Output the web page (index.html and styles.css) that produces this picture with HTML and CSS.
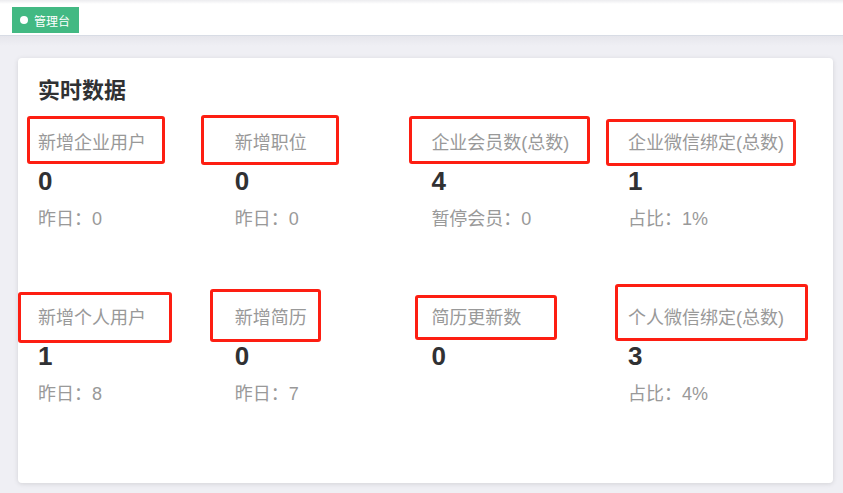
FILE: index.html
```html
<!DOCTYPE html>
<html lang="zh-CN">
<head>
  <meta charset="UTF-8">
  <meta name="viewport" content="width=device-width, initial-scale=1.0">
  <title>管理台</title>
  <link rel="stylesheet" href="styles.css">
</head>
<body>
  <div class="header">
    <div class="tag"><span class="dot"></span>管理台</div>
  </div>
  <div class="main">
    <div class="card">
      <h2 class="title">实时数据</h2>
      <div class="grid">
        <div class="item">
          <div class="label">新增企业用户</div>
          <div class="num">0</div>
          <div class="sub">昨日：0</div>
        </div>
        <div class="item">
          <div class="label">新增职位</div>
          <div class="num">0</div>
          <div class="sub">昨日：0</div>
        </div>
        <div class="item">
          <div class="label">企业会员数(总数)</div>
          <div class="num">4</div>
          <div class="sub">暂停会员：0</div>
        </div>
        <div class="item">
          <div class="label">企业微信绑定(总数)</div>
          <div class="num">1</div>
          <div class="sub">占比：1%</div>
        </div>
        <div class="item">
          <div class="label">新增个人用户</div>
          <div class="num">1</div>
          <div class="sub">昨日：8</div>
        </div>
        <div class="item">
          <div class="label">新增简历</div>
          <div class="num">0</div>
          <div class="sub">昨日：7</div>
        </div>
        <div class="item">
          <div class="label">简历更新数</div>
          <div class="num">0</div>
          <div class="sub"></div>
        </div>
        <div class="item">
          <div class="label">个人微信绑定(总数)</div>
          <div class="num">3</div>
          <div class="sub">占比：4%</div>
        </div>
      </div>
    </div>
  </div>

  <!-- annotation marks drawn over the screenshot -->
  <div class="mark m1"></div>
  <div class="mark m2"></div>
  <div class="mark m3"></div>
  <div class="mark m4"></div>
  <div class="mark m5"></div>
  <div class="mark m6"></div>
  <div class="mark m7"></div>
  <div class="mark m8"></div>
</body>
</html>
```

FILE: styles.css
```css
* {
  box-sizing: border-box;
}
html,
body {
  margin: 0;
  height: 100%;
}
body {
  position: relative;
  background-color: #efeff4;
  font-family: "Liberation Sans", "Noto Sans CJK SC", sans-serif;
  overflow: hidden;
}
.header {
  height: 36px;
  padding: 7px 0 0 12px;
  background: linear-gradient(#ececef, #fff 4px);
  border-bottom: 1px solid #d8dce5;
}
.tag {
  display: inline-flex;
  align-items: center;
  height: 26px;
  padding: 0 9px 0 8px;
  background-color: #42b983;
  color: #fff;
  font-size: 12px;
}
.tag .dot {
  width: 8px;
  height: 8px;
  margin-right: 6px;
  border-radius: 50%;
  background-color: #fff;
}
.main {
  padding: 22px 10px 10px 18px;
  background: linear-gradient(#e6e6ec, #efeff4 10px);
}
.card {
  height: 425px;
  padding: 18px 0 0 20px;
  background-color: #fff;
  border-radius: 4px;
  box-shadow: 0 1px 5px rgba(0, 0, 0, 0.12);
}
.title {
  margin: 0;
  line-height: 30px;
  font-size: 22px;
  font-weight: bold;
  color: #303133;
}
.grid {
  display: grid;
  grid-template-columns: repeat(4, 196.7px);
  row-gap: 61px;
  margin-top: 18px;
}
.item div {
  height: 38px;
  line-height: 38px;
  white-space: nowrap;
}
.label {
  font-size: 18px;
  color: #999;
}
.num {
  font-size: 26px;
  font-weight: bold;
  color: #303133;
}
.sub {
  font-size: 18px;
  color: #999;
}
.mark {
  position: absolute;
  border: 3px solid #fd1e12;
  border-radius: 3px;
}
.m1 { left: 27px; top: 116px; width: 138px; height: 48px; }
.m2 { left: 201px; top: 115px; width: 138px; height: 50px; }
.m3 { left: 409px; top: 116px; width: 181px; height: 48px; }
.m4 { left: 606px; top: 119px; width: 190px; height: 47px; }
.m5 { left: 18px; top: 292px; width: 154px; height: 51px; }
.m6 { left: 210px; top: 289px; width: 111px; height: 53px; }
.m7 { left: 415px; top: 295px; width: 142px; height: 45px; }
.m8 { left: 615px; top: 284px; width: 193px; height: 57px; }
```
